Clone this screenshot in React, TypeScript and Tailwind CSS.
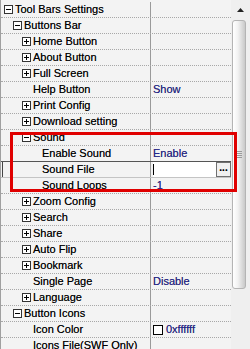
import React from "react";

/******************************************************************************
                            DATA
******************************************************************************/
type Row = {
  label: string;
  level: number;
  box?: "plus" | "minus";
  value?: string;
  kind?: "edit" | "color";
};

const rows: Row[] = [
  { label: "Tool Bars Settings", level: 1, box: "minus" },
  { label: "Buttons Bar", level: 2, box: "minus" },
  { label: "Home Button", level: 3, box: "plus" },
  { label: "About Button", level: 3, box: "plus" },
  { label: "Full Screen", level: 3, box: "plus" },
  { label: "Help Button", level: 3, value: "Show" },
  { label: "Print Config", level: 3, box: "plus" },
  { label: "Download setting", level: 3, box: "plus" },
  { label: "Sound", level: 3, box: "minus" },
  { label: "Enable Sound", level: 4, value: "Enable" },
  { label: "Sound File", level: 4, kind: "edit" },
  { label: "Sound Loops", level: 4, value: "-1" },
  { label: "Zoom Config", level: 3, box: "plus" },
  { label: "Search", level: 3, box: "plus" },
  { label: "Share", level: 3, box: "plus" },
  { label: "Auto Flip", level: 3, box: "plus" },
  { label: "Bookmark", level: 3, box: "plus" },
  { label: "Single Page", level: 3, value: "Disable" },
  { label: "Language", level: 3, box: "plus" },
  { label: "Button Icons", level: 2, box: "minus" },
  { label: "Icon Color", level: 3, kind: "color", value: "0xffffff" },
  { label: "Icons File(SWF Only)", level: 3 },
];

/******************************************************************************
                            PIECES
******************************************************************************/
const ExpandBox: React.FC<{ type: "plus" | "minus" }> = ({ type }) => (
  <svg width="9" height="9" viewBox="0 0 9 9" className="shrink-0">
    <rect x="0.5" y="0.5" width="8" height="8" fill="#fff" stroke="#333" />
    <line x1="2" y1="4.5" x2="7" y2="4.5" stroke="#000" />
    {type === "plus" && <line x1="4.5" y1="2" x2="4.5" y2="7" stroke="#000" />}
  </svg>
);

const padByLevel: Record<number, string> = {
  1: "pl-[3px]",
  2: "pl-[12px]",
  3: "pl-[21px]",
  4: "pl-[30px]",
};

const leafPadByLevel: Record<number, string> = {
  1: "pl-[14px]",
  2: "pl-[23px]",
  3: "pl-[32px]",
  4: "pl-[41px]",
};

const GridRow: React.FC<{ row: Row; beforeEdit?: boolean }> = ({ row, beforeEdit }) => {
  const editing = row.kind === "edit";
  const line = beforeEdit
    ? "border-solid border-[#555555]"
    : editing
      ? "border-solid border-[#c4c4c4]"
      : "border-dotted border-[#a8a8a8]";
  return (
    <div className={`flex h-[16px] border-b ${line}`}>
      <div
        className={`flex shrink-0 items-center gap-[2px] border-r border-r-[#9a9a9a] ${
          editing ? "ml-[1px] w-[149px] border-l border-l-[#444444] pl-[39px]" : "w-[150px]"
        } ${editing ? "" : row.box ? padByLevel[row.level] : leafPadByLevel[row.level]}`}
      >
        {row.box && <ExpandBox type={row.box} />}
        <span className="whitespace-nowrap">{row.label}</span>
      </div>
      <div className="flex min-w-0 flex-1 items-center pl-[2px] text-[#26268f]">
        {editing ? (
          <div className="flex h-full w-full items-center">
            <div className="flex h-full flex-1 items-center bg-white">
              <div className="h-[11px] w-px bg-black" />
            </div>
            <div className="flex h-[15px] w-[15px] items-center justify-center border border-[#707070] bg-[#f0f0f0] pb-[3px] text-[10px] font-bold leading-none text-black">
              ...
            </div>
          </div>
        ) : row.kind === "color" ? (
          <div className="flex items-center gap-[3px]">
            <div className="h-[10px] w-[10px] border border-black bg-white" />
            <span>{row.value}</span>
          </div>
        ) : (
          <span>{row.value}</span>
        )}
      </div>
    </div>
  );
};

const ScrollBar: React.FC = () => (
  <div className="flex w-[19px] shrink-0 flex-col bg-[#efefef]">
    <div className="flex h-[20px] items-center justify-center pr-[1px]">
      <svg width="7" height="4" viewBox="0 0 7 4">
        <path d="M3.5 0 L7 4 L0 4 Z" fill="#222" />
      </svg>
    </div>
    <div className="ml-[1px] mr-[4px] flex h-[269px] items-center justify-center rounded-[3px] border border-[#b4b4b4] bg-[linear-gradient(90deg,#ffffff_0%,#f2f2f2_40%,#c9c9c9_100%)]">
      <div className="flex flex-col gap-[1px]">
        <div className="h-px w-[6px] bg-[#9a9a9a]" />
        <div className="h-px w-[6px] bg-[#9a9a9a]" />
        <div className="h-px w-[6px] bg-[#9a9a9a]" />
        <div className="h-px w-[6px] bg-[#9a9a9a]" />
      </div>
    </div>
  </div>
);

/******************************************************************************
                            COMPONENT
******************************************************************************/
export default function App() {
  return (
    <div className="relative h-[349px] w-[250px] overflow-hidden bg-[#f3f3f3] font-['Liberation_Sans',Arial,sans-serif] text-[11px] leading-none text-black [text-shadow:0_0_0.4px_rgba(0,0,0,0.6)]">
      <div className="flex h-full">
        <div className="flex-1 border-l border-[#a0a0a0] pt-[2px]">
          {rows.map((r, i) => (
            <GridRow key={r.label} row={r} beforeEdit={rows[i + 1]?.kind === "edit"} />
          ))}
        </div>
        <ScrollBar />
      </div>

      {/* highlight annotation */}
      <div className="pointer-events-none absolute left-[10px] top-[132px] h-[60px] w-[227px] border-[3px] border-[#e00000]" />
    </div>
  );
}
